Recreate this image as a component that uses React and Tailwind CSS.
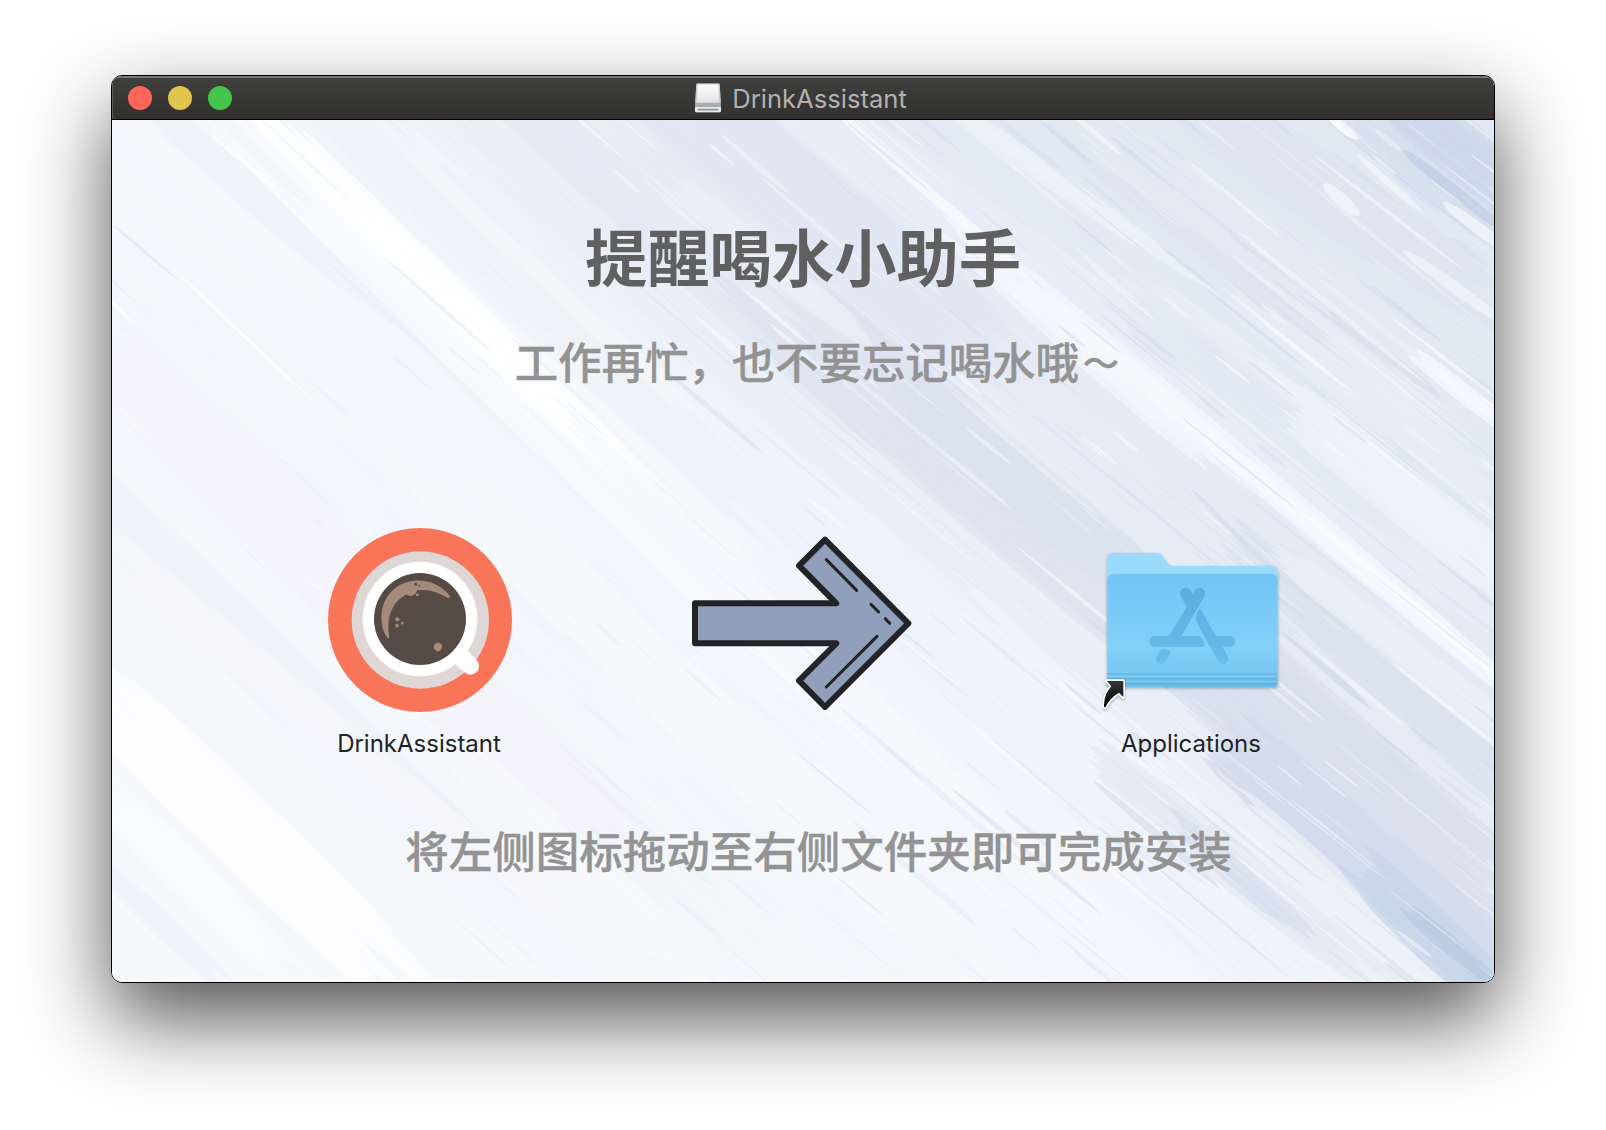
import React from "react";

// Tapered brush stroke between two points.
function brush(x1, y1, x2, y2, w) {
  const dx = x2 - x1;
  const dy = y2 - y1;
  const len = Math.hypot(dx, dy);
  const nx = (-dy / len) * (w / 2);
  const ny = (dx / len) * (w / 2);
  const at = (t, k) =>
    `${(x1 + dx * t + nx * k).toFixed(1)} ${(y1 + dy * t + ny * k).toFixed(1)}`;
  return `M${at(0, 0)}L${at(0.1, 0.6)}L${at(0.25, 0.8)}L${at(0.55, 1.05)}L${at(0.82, 0.8)}L${at(1, 0.1)}L${at(0.93, -0.5)}L${at(0.75, -0.85)}L${at(0.4, -1)}L${at(0.15, -0.8)}L${at(0.04, -0.5)}Z`;
}

function mulberry(seed) {
  let a = seed;
  return () => {
    a = (a + 0x6d2b79f5) | 0;
    let t = Math.imul(a ^ (a >>> 15), 1 | a);
    t = (t + Math.imul(t ^ (t >>> 7), 61 | t)) ^ t;
    return ((t ^ (t >>> 14)) >>> 0) / 4294967296;
  };
}

// x1, y1, x2, y2, width, colour
const BANDS = [
  [-80, 130, 780, 900, 130, "#f2f6fa"],
  [-60, 180, 640, 860, 70, "#f3f4f9"],
  [-80, 320, 480, 860, 60, "#f0f4f8"],
  [-60, 380, 560, 900, 34, "#f6f7fb"],
  [-60, 10, 170, 185, 18, "#f7f9fc"],
  [-40, -40, 260, 215, 24, "#f7f8fc"],
  [20, -30, 330, 235, 24, "#eef2fa"],
  [90, -40, 560, 370, 34, "#f7f8fc"],
  [260, 170, 700, 560, 26, "#eff3f8"],
  [90, -40, 800, 650, 58, "#fafbfe"],
  [120, -40, 560, 400, 32, "#fdfeff"],
  [300, 330, 900, 880, 60, "#f7f9fc"],
  [190, -30, 600, 325, 34, "#eef2f7"],
  [240, -30, 700, 390, 26, "#f3f6fa"],
  [320, 30, 620, 300, 18, "#edf1f9"],
  [310, -40, 1040, 590, 60, "#e9eef6"],
  [380, -40, 760, 300, 44, "#e2e9f3"],
  [430, -40, 1140, 580, 80, "#e5eaf5"],
  [520, -60, 900, 250, 80, "#e1e7f2"],
  [640, 160, 1180, 620, 90, "#dee4f0"],
  [760, 250, 1080, 500, 50, "#dae2ee"],
  [560, 60, 780, 240, 20, "#e9eff6"],
  [520, 250, 1180, 860, 90, "#eef2f9"],
  [440, 280, 1100, 900, 60, "#f6f8fc"],
  [600, 380, 1120, 880, 40, "#f3f5fb"],
  [850, 500, 1250, 880, 60, "#f1f4fa"],
  [-60, 530, 330, 900, 66, "#fefeff"],
  [-40, 640, 190, 870, 40, "#fafbfe"],
  [120, 560, 520, 900, 30, "#f3f6fb"],
  [-40, 720, 120, 870, 18, "#eff3f9"],
  [330, 620, 640, 900, 34, "#f8fafc"],
  [650, -40, 1300, 420, 60, "#e8edf6"],
  [800, -40, 1100, 170, 16, "#edf2f8"],
  [1000, 20, 1382, 300, 60, "#e4e9f3"],
  [1060, -30, 1420, 210, 60, "#dee5f1"],
  [1100, 150, 1400, 380, 50, "#e7edf5"],
  [1000, 170, 1420, 510, 80, "#e8edf6"],
  [1010, 180, 1310, 420, 40, "#e1e9f3"],
  [1140, 255, 1440, 490, 46, "#eef2f8"],
  [1215, 190, 1330, 278, 12, "#dae1ed"],
  [960, 30, 1240, 240, 14, "#dfe5f1"],
  [1294, 228, 1410, 318, 14, "#f8fafd"],
  [1290, 130, 1400, 208, 12, "#edf1f8"],
  [1220, -30, 1440, 130, 60, "#d6dfed"],
  [1270, -30, 1440, 100, 46, "#cdd7ea"],
  [1290, 30, 1400, 116, 12, "#c3d0e6"],
  [1244, 34, 1312, 94, 7, "#f0f4f9"],
  [1211, 64, 1248, 96, 13, "#f0f3f9"],
  [1212, -8, 1246, 20, 9, "#fafbfd"],
  [1330, 82, 1410, 140, 12, "#f0f4f9"],
  [1030, 480, 1440, 830, 100, "#d8dfed"],
  [1110, 620, 1440, 900, 70, "#d3dbeb"],
  [1130, 420, 1440, 700, 50, "#dae3ee"],
  [1150, 420, 1440, 650, 26, "#e9eff6"],
  [1080, 610, 1320, 810, 36, "#d3dceb"],
  [1160, 500, 1260, 590, 8, "#d3ddec"],
  [990, 640, 1300, 890, 34, "#e4eaf4"],
  [1130, 690, 1340, 880, 36, "#edf1f8"],
  [1050, 690, 1200, 820, 18, "#d6e0ed"],
  [1240, 740, 1410, 900, 44, "#c9d5e8"],
  [1280, 775, 1400, 880, 14, "#bccae3"],
  [980, 660, 1110, 770, 8, "#dbe4f0"],
  [700, -30, 930, 170, 12, "#f6f8fb"],
  [840, 110, 1140, 375, 26, "#f4f6fb"],
  [850, 105, 1420, 590, 20, "#f4f9fc"],
  [1180, 385, 1440, 600, 8, "#fafcfe"],
  [1080, 370, 1180, 470, 6, "#d5dfed"],
  [98, 14, 168, 72, 4, "#ffffff"],
  [56, 144, 204, 284, 3, "#fdfdff"],
  [0, 104, 66, 160, 3, "#e6ebf2"],
  [-10, 172, 22, 204, 2, "#ffffff"],
];

// Wide bands are laid down as several bristles with uneven ends.
function makeBristles() {
  const rnd = mulberry(7);
  const out = [];
  for (const [x1, y1, x2, y2, w, fill] of BANDS) {
    if (w < 14) {
      out.push({ d: brush(x1, y1, x2, y2, w), fill, opacity: 0.9 });
      continue;
    }
    const dx = x2 - x1;
    const dy = y2 - y1;
    const len = Math.hypot(dx, dy);
    const n = Math.ceil(w / 6);
    for (let i = 0; i < n; i++) {
      const off = ((i + 0.5) / n - 0.5) * w;
      const ox = (-dy / len) * off;
      const oy = (dx / len) * off;
      const a = (rnd() - 0.3) * 0.22;
      const b = 1 - (rnd() - 0.3) * 0.26;
      out.push({
        d: brush(x1 + dx * a + ox, y1 + dy * a + oy, x1 + dx * b + ox, y1 + dy * b + oy, Math.min(w * 0.7, 11 + rnd() * 7)),
        fill,
        opacity: 0.7,
      });
    }
  }
  return out;
}

function makeStreaks() {
  const rnd = mulberry(41);
  const out = [];
  for (let i = 0; i < 1100; i++) {
    const x = -60 + rnd() * 1460;
    const y = -60 + rnd() * 920;
    const depth = Math.min(1, Math.max(0, (x - y * 0.35) / 1000));
    const keep = rnd();
    if (keep > 0.07 + depth * 1.0) continue;
    const slope = 0.93 - 0.16 * (x / 1382) + (rnd() - 0.5) * 0.05;
    const run = 25 + rnd() * rnd() * 190;
    const w = 1.2 + rnd() * rnd() * 6;
    const light = rnd() < 0.55;
    const tone = rnd();
    let fill;
    if (light) fill = tone < 0.5 ? "#fbfcfe" : "#f0f4fa";
    else if (depth < 0.45) fill = "#e6ecf5";
    else if (depth < 0.75) fill = tone < 0.5 ? "#d8e0ee" : "#dce7f0";
    else fill = tone < 0.5 ? "#cdd8eb" : "#d4e0ec";
    out.push({
      d: brush(x, y, x + run, y + run * slope, w),
      fill,
      opacity: 0.22 + rnd() * 0.35,
    });
  }
  return out;
}

const STROKES = [...makeBristles(), ...makeStreaks()];

function Marble() {
  return (
    <svg
      className="absolute inset-0 h-full w-full"
      viewBox="0 0 1382 862"
      preserveAspectRatio="none"
      aria-hidden="true"
    >
      <defs>
        <linearGradient id="wash" gradientUnits="userSpaceOnUse" x1="240" y1="840" x2="980" y2="40">
          <stop offset="0" stopColor="#f6f8fc" />
          <stop offset="0.5" stopColor="#f3f6fa" />
          <stop offset="0.72" stopColor="#e8edf6" />
          <stop offset="1" stopColor="#e1e9f3" />
        </linearGradient>
      </defs>
      <rect width="1382" height="862" fill="url(#wash)" />
      {STROKES.map((s, i) => (
        <path key={i} d={s.d} fill={s.fill} fillOpacity={s.opacity} />
      ))}
    </svg>
  );
}

function DiskIcon() {
  return (
    <svg className="h-[30px] w-[28px] shrink-0" viewBox="0 0 28 30" aria-hidden="true">
      <defs>
        <linearGradient id="diskTop" x1="0" y1="0" x2="0" y2="1">
          <stop offset="0" stopColor="#ffffff" />
          <stop offset="1" stopColor="#e2e2e2" />
        </linearGradient>
      </defs>
      <path d="M3.3 0.5H24.7Q25.6 0.5 25.7 1.4L27 22.5V28Q27 29.3 25.8 29.3H2.2Q1 29.3 1 28V22.5L2.3 1.4Q2.4 0.5 3.3 0.5Z" fill="#a9abad" />
      <path d="M3.3 0.5H24.7Q25.6 0.5 25.7 1.4L26.8 20H1.2L2.3 1.4Q2.4 0.5 3.3 0.5Z" fill="#c3cbce" />
      <path d="M4.6 1.6H23.4Q24.3 1.6 24.4 2.4L25 18Q25 19.4 23.7 19.4H4.3Q3 19.4 3 18L3.6 2.4Q3.7 1.6 4.6 1.6Z" fill="url(#diskTop)" />
      <rect x="1" y="24" width="26" height="5.3" rx="1.2" fill="#e3e8e9" />
      <rect x="3.5" y="25.8" width="21" height="1.6" rx="0.8" fill="#8b9797" />
    </svg>
  );
}

function CoffeeIcon() {
  return (
    <svg className="h-[184px] w-[184px]" viewBox="54 54 552 552" aria-hidden="true">
      <circle cx="330" cy="330" r="276" fill="#f97559" />
      <circle cx="331" cy="330" r="206" fill="#dfd7d5" />
      <path d="M448 434L481 468" stroke="#fff" strokeWidth="52" strokeLinecap="round" />
      <path d="M468 414Q474 430 490 440L450 478Q440 462 424 456Z" fill="#fff" />
      <circle cx="330" cy="327" r="172" fill="#fff" />
      <circle cx="330" cy="327" r="138" fill="#564a45" />
      <path
        d="M232 384C205 345 208 280 246 243C290 199 372 200 418 256Q422 264 414 264C384 247 354 236 322 241Q315 258 301 258Q295 258 291 253C244 277 229 324 238 378Q238 387 232 384Z"
        fill="#a58a7a"
      />
      <g fill="#564a45">
        <circle cx="317" cy="223" r="4.5" />
        <circle cx="328" cy="227" r="2.8" />
      </g>
      <g fill="#a58a7a">
        <circle cx="322" cy="254" r="4.5" />
        <circle cx="262" cy="328" r="6.5" />
        <circle cx="277" cy="339" r="4.5" />
        <circle cx="261" cy="347" r="5.5" />
        <circle cx="384" cy="411" r="12.5" />
      </g>
    </svg>
  );
}

function ArrowDrawing() {
  return (
    <svg className="h-[174px] w-[220px]" viewBox="38 34 660 522" aria-hidden="true">
      <path
        d="M47 236H471L359 123L437 45L687 296L437 547L359 468L471 356H47Z"
        fill="#909fba"
        stroke="#212327"
        strokeWidth="18"
        strokeLinejoin="round"
      />
      <path
        d="M441 105L532 197M575 239L598 262M618 282L631 296M593 335L441 487"
        fill="none"
        stroke="#212327"
        strokeWidth="9"
        strokeLinecap="round"
      />
    </svg>
  );
}

function FolderIcon() {
  return (
    <svg className="h-[184px] w-[184px] overflow-visible" viewBox="60 -6 552 552" aria-hidden="true">
      <defs>
        <linearGradient id="folderFront" x1="0" y1="0" x2="0" y2="1">
          <stop offset="0" stopColor="#72c4f3" />
          <stop offset="0.65" stopColor="#83d0f9" />
          <stop offset="0.85" stopColor="#78c8f2" />
          <stop offset="1" stopColor="#64b7e5" />
        </linearGradient>
        <linearGradient id="glyph" gradientUnits="userSpaceOnUse" x1="0" y1="174" x2="0" y2="403">
          <stop offset="0" stopColor="#5aaee0" />
          <stop offset="1" stopColor="#6abbe8" />
        </linearGradient>
        <linearGradient id="aliasFill" x1="0" y1="0" x2="0" y2="1">
          <stop offset="0" stopColor="#34373a" />
          <stop offset="1" stopColor="#000000" />
        </linearGradient>
        <filter id="soft" x="-10%" y="-10%" width="120%" height="125%">
          <feDropShadow dx="0" dy="4" stdDeviation="4" floodColor="#1c3a5c" floodOpacity="0.4" />
        </filter>
      </defs>
      <g filter="url(#soft)">
        <path
          d="M82 90Q82 69 103 69H230Q241 69 247 78L260 97Q267 108 280 108H571Q593 108 593 130V458Q593 470 581 470H94Q82 470 82 458Z"
          fill="#99dafd"
        />
        <path d="M82 152Q82 132 102 132H573Q593 132 593 152V458Q593 470 581 470H94Q82 470 82 458Z" fill="url(#folderFront)" />
      </g>
      <g strokeWidth="3">
        <path d="M83 426H592M83 440H592M83 455H592" stroke="#85cef5" />
        <path d="M83 432H592M83 446H592M83 461H592" stroke="#5fb0de" />
      </g>
      <g fill="url(#glyph)">
        <path d="M302 198A16.500 16.500 0 0 1 331 181L338 193L345 181A16.500 16.500 0 0 1 373 199L304 318H267L320 230Z" />
        <path d="M224 318H356Q371 321 373 350H224A16 16 0 0 1 224 318Z" />
        <path d="M359 236Q340 258 355 287L415 394Q426 407 438 400Q449 391 443 378L427 350H450A16 16 0 0 0 450 318H408L363 239Z" />
        <path d="M242 359Q258 353 274 367L257 394Q247 407 235 400Q225 392 232 378Z" />
      </g>
      <path
        d="M80 453L130 453V501L117 488Q89 504 76 532Q71 533 72 524Q73 491 94 469Z"
        fill="url(#aliasFill)"
        stroke="#ffffff"
        strokeWidth="10"
        strokeLinejoin="round"
        paintOrder="stroke"
        filter="url(#soft)"
      />
    </svg>
  );
}

function Item({ label, children }) {
  return (
    <div className="flex w-[184px] flex-col items-center">
      {children}
      <span className="mt-4 -ml-[2px] whitespace-nowrap text-[24px] leading-8 text-[#212325]">{label}</span>
    </div>
  );
}

export default function App() {
  return (
    <div className="h-[1130px] w-[1606px] overflow-hidden bg-white pt-[75px] pl-[111px] font-['Inter','Noto_Sans_CJK_SC',sans-serif]">
      <div className="flex h-[908px] w-[1384px] flex-col overflow-hidden rounded-[11px] border border-black shadow-[0_36px_84px_rgba(0,0,0,0.68)]">
        <header className="grid h-[44px] shrink-0 grid-cols-[1fr_auto_1fr] items-center border-b border-black bg-linear-to-b from-[#40403e] to-[#31302e] pr-[21px] pl-4 shadow-[inset_0_2px_0_#777775,inset_1px_0_0_#5c5c5a]">
          <div className="flex gap-4">
            <span className="h-6 w-6 rounded-full bg-[#ff6559]" />
            <span className="h-6 w-6 rounded-full bg-[#e1c44b]" />
            <span className="h-6 w-6 rounded-full bg-[#44c448]" />
          </div>
          <div className="flex items-center gap-[10px]">
            <DiskIcon />
            <h1 className="pt-[2px] text-[25.6px] leading-8 text-[#b2b1af]">DrinkAssistant</h1>
          </div>
        </header>
        <main className="relative flex-1 overflow-hidden">
          <Marble />
          <div className="relative flex h-full flex-col items-center font-['Noto_Sans_CJK_SC',sans-serif]">
            <h2 className="mt-[99px] text-[62.3px] leading-[72px] font-bold text-[#606060]">提醒喝水小助手</h2>
            <p className="mt-[39px] ml-[31px] h-[60px] text-[43.4px] leading-[60px] font-medium whitespace-nowrap text-[#939393] [-webkit-text-stroke:0.4px_#939393]">
              工作再忙，也不要忘记喝水哦
              <span className="mr-[3px] ml-[4px] align-[2px] text-[36.4px] leading-none">～</span>
            </p>
            <div className="mt-[138px] flex w-full items-start justify-between pr-[210px] pl-[216px] font-['Inter',sans-serif]">
              <Item label="DrinkAssistant">
                <CoffeeIcon />
              </Item>
              <div className="mt-[8px] -ml-[8px]">
                <ArrowDrawing />
              </div>
              <Item label="Applications">
                <FolderIcon />
              </Item>
            </div>
            <p className="mt-[60px] ml-[31px] text-[43.5px] leading-[60px] font-medium text-[#939393] [-webkit-text-stroke:0.4px_#939393]">
              将左侧图标拖动至右侧文件夹即可完成安装
            </p>
          </div>
        </main>
      </div>
    </div>
  );
}
